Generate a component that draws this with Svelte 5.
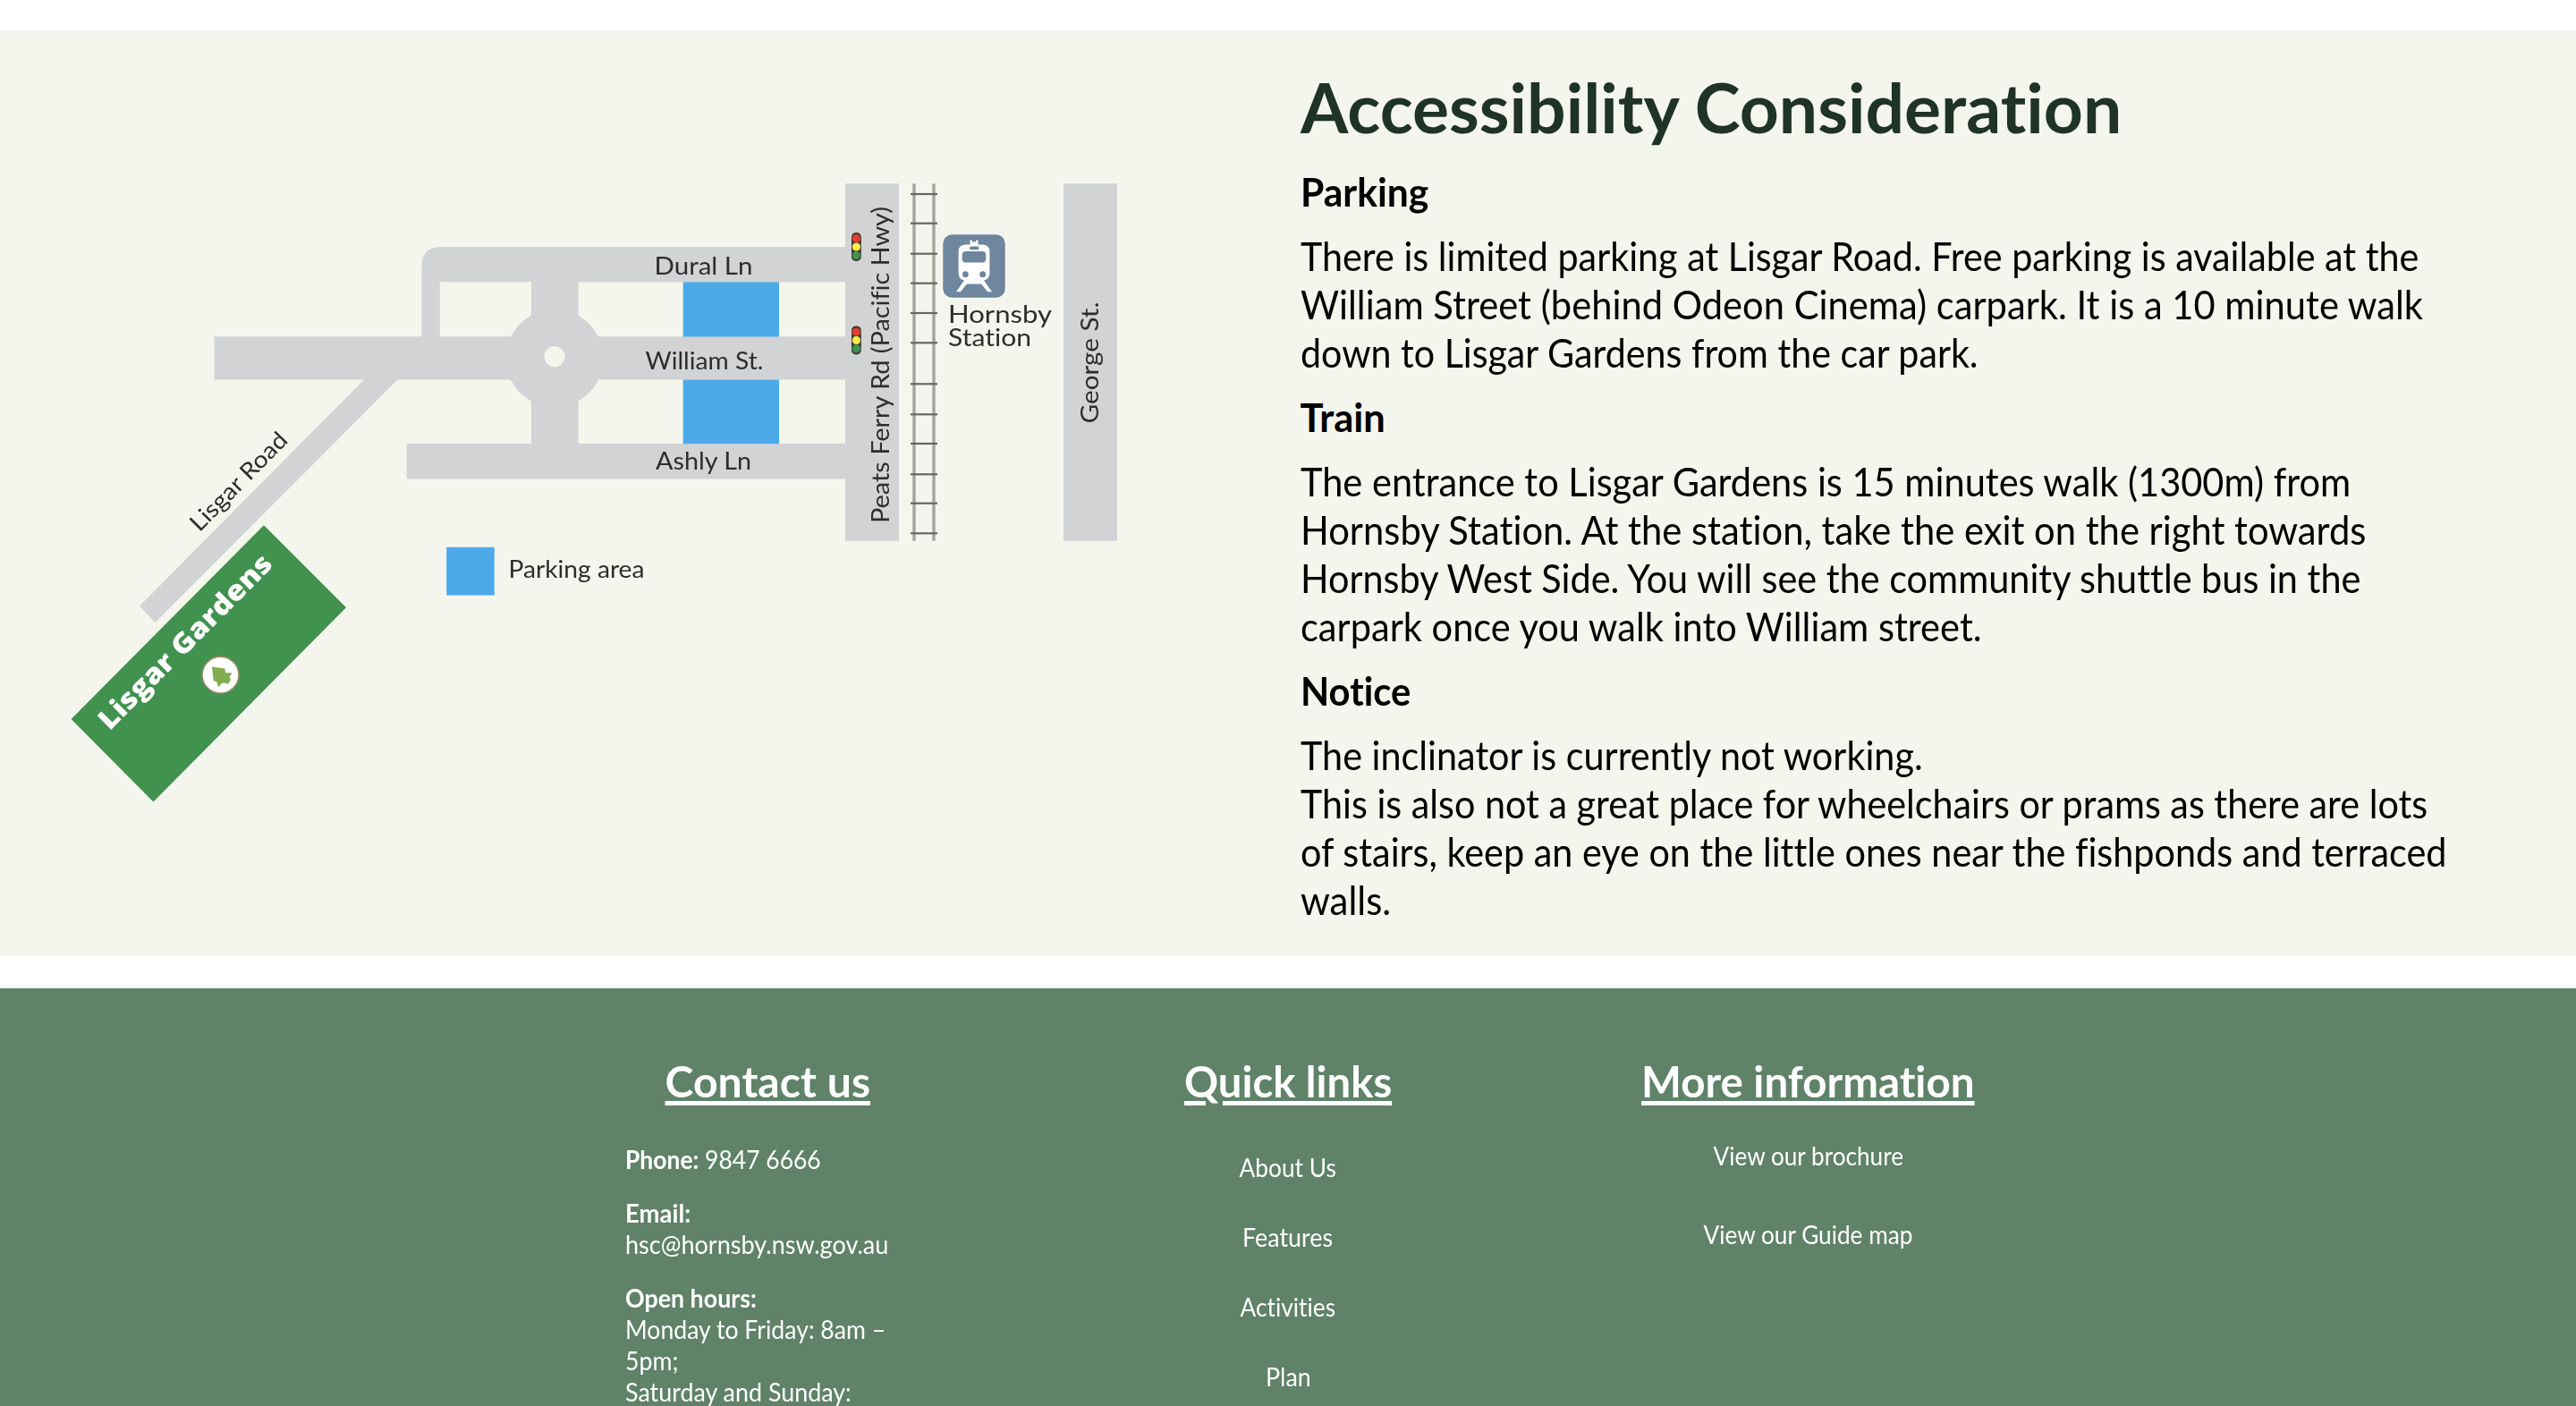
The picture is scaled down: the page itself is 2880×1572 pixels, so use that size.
<script>
  // Scales a single text line horizontally so that its glyphs span the given width.
  function fit(node, width) {
    node.style.setProperty('--sx', String(width / node.offsetWidth));
  }

  const sections = [
    {
      title: 'Parking', width: 143,
      lines: [
        ['There is limited parking at Lisgar Road. Free parking is available at the', 1250],
        ['William Street (behind Odeon Cinema) carpark. It is a 10 minute walk', 1255],
        ['down to Lisgar Gardens from the car park.', 758]
      ]
    },
    {
      title: 'Train', width: 95,
      lines: [
        ['The entrance to Lisgar Gardens is 15 minutes walk (1300m) from', 1174],
        ['Hornsby Station. At the station, take the exit on the right towards', 1191],
        ['Hornsby West Side. You will see the community shuttle bus in the', 1185],
        ['carpark once you walk into William street.', 762]
      ]
    },
    {
      title: 'Notice', width: 123,
      lines: [
        ['The inclinator is currently not working.', 696],
        ['This is also not a great place for wheelchairs or prams as there are lots', 1260],
        ['of stairs, keep an eye on the little ones near the fishponds and terraced', 1281],
        ['walls.', 101]
      ]
    }
  ];

  const quickLinks = [['About Us', 108], ['Features', 101], ['Activities', 107], ['Plan', 51]];
  const moreLinks = [['View our brochure', 212], ['View our Guide map', 234]];
  const sleepers = [217, 249.7, 283.7, 316.7, 350, 383.3, 429.3, 463.3, 496, 530.3, 562.7, 596.3];
  const signals = [276, 380.4];
</script>

<main class="access">
  <svg class="map" viewBox="0 34 1440 1035" role="img" aria-label="Map to Lisgar Gardens">
    <g class="road">
      <path d="M239.6 376.3H945V424.5H444.5L173.5 696L156 677.5L407 424.5H239.6Z" />
      <path d="M471.4 378V298Q471.4 276 494 276H946V315.3H491.8V378Z" />
      <rect x="454.7" y="496" width="491" height="39.4" />
      <rect x="594" y="300" width="52.6" height="210" />
      <circle cx="620" cy="400.6" r="54.5" />
      <rect x="945" y="205.3" width="60" height="399.5" />
      <rect x="1189" y="205.3" width="60" height="399.5" />
    </g>
    <circle class="island" cx="620" cy="398.6" r="11.6" />
    <g class="parking">
      <rect x="763.7" y="315.3" width="107.3" height="61.2" />
      <rect x="763.7" y="424.5" width="107.3" height="71.7" />
      <rect x="499.2" y="611.8" width="53.5" height="53.8" />
    </g>

    <path class="rail" d="M1022 205.5V604.7M1044 205.5V604.7" />
    {#each sleepers as y}
      <path class="sleeper" d="M1018 {y}H1048" />
    {/each}

    {#each signals as y}
      <rect class="signal" x="952" y={y - 16} width="10.8" height="32" rx="5" />
      <circle class="red" cx="957.4" cy={y - 9.4} r="4.6" />
      <circle class="yellow" cx="957.4" cy={y} r="4.6" />
      <circle class="green" cx="957.4" cy={y + 9.4} r="4.6" />
    {/each}

    <rect class="badge" x="1054.3" y="262.3" width="69.4" height="70.4" rx="10" />
    <path class="white" d="M1084.5 268.5H1087V270.5H1091V268.5H1093.5V273.5H1099Q1106.4 274 1106.4 281V305Q1106.4 312 1100 313.5L1109 326.3H1104.3L1097 317.5H1081L1073.8 326.3H1069L1078 313.5Q1071.6 312 1071.6 305V281Q1071.6 274 1079 273.5H1084.5Z" />
    <rect class="badge" x="1084" y="275.4" width="10.4" height="3.8" rx="1.5" />
    <rect class="badge" x="1075.7" y="281" width="26.6" height="12.4" rx="4" />
    <circle class="badge" cx="1079.4" cy="306.7" r="3.4" />
    <circle class="badge" cx="1098.7" cy="306.7" r="3.4" />

    <path class="garden" d="M295 587.3L387 679.3L171.4 896.4L79.6 803.9Z" />
    <circle class="seal" cx="246.5" cy="754.6" r="20.5" />
    <path class="tree" d="M237 745.5L251.5 747.5L252 752L259.5 752.5L256.5 756.5L258 760L255 764.5L250.5 763.5L248 764L244.3 768.3L242 762L238.7 761.3Z" />

    <g class="label">
      <text x="731.5" y="306.7" textLength="110" lengthAdjust="spacingAndGlyphs">Dural Ln</text>
      <text x="721.5" y="412.7" textLength="132" lengthAdjust="spacingAndGlyphs">William St.</text>
      <text x="733" y="525" textLength="107" lengthAdjust="spacingAndGlyphs">Ashly Ln</text>
      <text x="568.5" y="646" textLength="152" lengthAdjust="spacingAndGlyphs">Parking area</text>
      <text x="1060" y="361" textLength="116" lengthAdjust="spacingAndGlyphs">Hornsby</text>
      <text x="1060" y="386.7" textLength="93" lengthAdjust="spacingAndGlyphs">Station</text>
      <text transform="translate(994.3 585) rotate(-90)" textLength="354" lengthAdjust="spacingAndGlyphs">Peats Ferry Rd (Pacific Hwy)</text>
      <text transform="translate(1228.3 473.5) rotate(-90)" textLength="136" lengthAdjust="spacingAndGlyphs">George St.</text>
      <text transform="translate(223 595.5) rotate(-45.5)" textLength="143" lengthAdjust="spacingAndGlyphs">Lisgar Road</text>
      <text class="name" transform="translate(122.5 817.5) rotate(-45.2)" textLength="261" lengthAdjust="spacingAndGlyphs">Lisgar Gardens</text>
    </g>
  </svg>

  <div class="copy">
    <h1><span class="line" use:fit={918}>Accessibility Consideration</span></h1>
    {#each sections as s}
      <h2><span class="line" use:fit={s.width}>{s.title}</span></h2>
      <p>
        {#each s.lines as [text, width]}
          <span class="line" use:fit={width}>{text}</span>
        {/each}
      </p>
    {/each}
  </div>
</main>

<footer>
  <section>
    <h3><span class="line" use:fit={230}>Contact us</span></h3>
    <address>
      <p><span class="line" use:fit={219}><b>Phone:</b> 9847 6666</span></p>
      <p>
        <span class="line" use:fit={73}><b>Email:</b></span>
        <span class="line" use:fit={294}>hsc@hornsby.nsw.gov.au</span>
      </p>
      <p>
        <span class="line" use:fit={147}><b>Open hours:</b></span>
        <span class="line" use:fit={291}>Monday to Friday: 8am –</span>
        <span class="line" use:fit={60}>5pm;</span>
        <span class="line" use:fit={253}>Saturday and Sunday:</span>
      </p>
    </address>
  </section>
  <section>
    <h3><span class="line" use:fit={232}>Quick links</span></h3>
    <nav class="quick">
      {#each quickLinks as [text, width]}
        <a href="#top"><span class="line" use:fit={width}>{text}</span></a>
      {/each}
    </nav>
  </section>
  <section>
    <h3><span class="line" use:fit={373}>More information</span></h3>
    <nav class="more">
      {#each moreLinks as [text, width]}
        <a href="#top"><span class="line" use:fit={width}>{text}</span></a>
      {/each}
    </nav>
  </section>
</footer>

<style>
  :global(body) {
    background: #fff;
    overflow: hidden;
  }
  :global(#app) {
    display: flex;
    flex-direction: column;
    height: 1572px;
    padding-top: 34px;
    box-sizing: border-box;
    overflow: hidden;
    font-family: Lato, 'Liberation Sans', sans-serif;
    font-variant-ligatures: none;
  }

  h1, h2, h3, p {
    margin: 0;
  }
  .line {
    display: block;
    width: max-content;
    white-space: nowrap;
    transform: scaleX(var(--sx, 1));
    transform-origin: left;
  }

  .access {
    flex: none;
    display: grid;
    grid-template-columns: 1440px 1fr;
    height: 1035px;
    background: #f4f5ec;
    margin-bottom: 36px;
  }
  .map {
    width: 1440px;
    height: 1035px;
    filter: blur(0.6px);
  }
  .road { fill: #d2d3d5; }
  .island { fill: #f4f5ec; }
  .parking { fill: #4daae9; }
  .rail { stroke: #a3a49e; stroke-width: 3.4; }
  .sleeper { stroke: #656562; stroke-width: 2.2; }
  .signal { fill: #3c3a34; }
  .red { fill: #e23d30; }
  .yellow { fill: #fbe94c; }
  .green { fill: #3f944b; }
  .badge { fill: #6f869f; }
  .white { fill: #fff; }
  .garden { fill: #41924e; }
  .seal { fill: #fff; stroke: #938a64; stroke-width: 1.6; }
  .tree { fill: #82ad4f; }
  .label { font-size: 26px; fill: #2d2d2d; }
  .name {
    font-family: 'Open Sans', Lato, sans-serif;
    font-size: 31px;
    font-weight: 800;
    fill: #fff;
  }

  .copy {
    padding: 37px 0 0 13.5px;
    color: #000;
    font-size: 43.5px;
    line-height: 54px;
  }
  h1 {
    font-size: 76px;
    line-height: 98px;
    font-weight: 700;
    color: #1f3327;
    margin-bottom: 18px;
  }
  h2 {
    font-size: inherit;
    font-weight: 700;
  }
  .copy p {
    padding: 18px 0;
  }

  footer {
    flex: 1;
    display: grid;
    grid-template-columns: repeat(3, 581.5px);
    justify-content: center;
    background: #5f8268;
    color: #fff;
    font-size: 29px;
    line-height: 35px;
  }
  section {
    display: flex;
    flex-direction: column;
    align-items: center;
    padding-top: 74px;
  }
  h3 {
    font-size: 48px;
    line-height: 60px;
    font-weight: 700;
    text-decoration: underline;
    text-decoration-thickness: 5px;
    text-underline-offset: 4px;
  }
  h3 .line, a .line {
    transform-origin: center;
  }
  address {
    width: 319px;
    padding-top: 39px;
    font-style: normal;
  }
  address p {
    padding-bottom: 25px;
  }
  nav {
    display: flex;
    flex-direction: column;
    align-items: center;
  }
  a {
    color: inherit;
    text-decoration: none;
  }
  .quick {
    padding-top: 48px;
    gap: 43px;
  }
  .more {
    padding-top: 35px;
    gap: 53px;
  }
</style>
